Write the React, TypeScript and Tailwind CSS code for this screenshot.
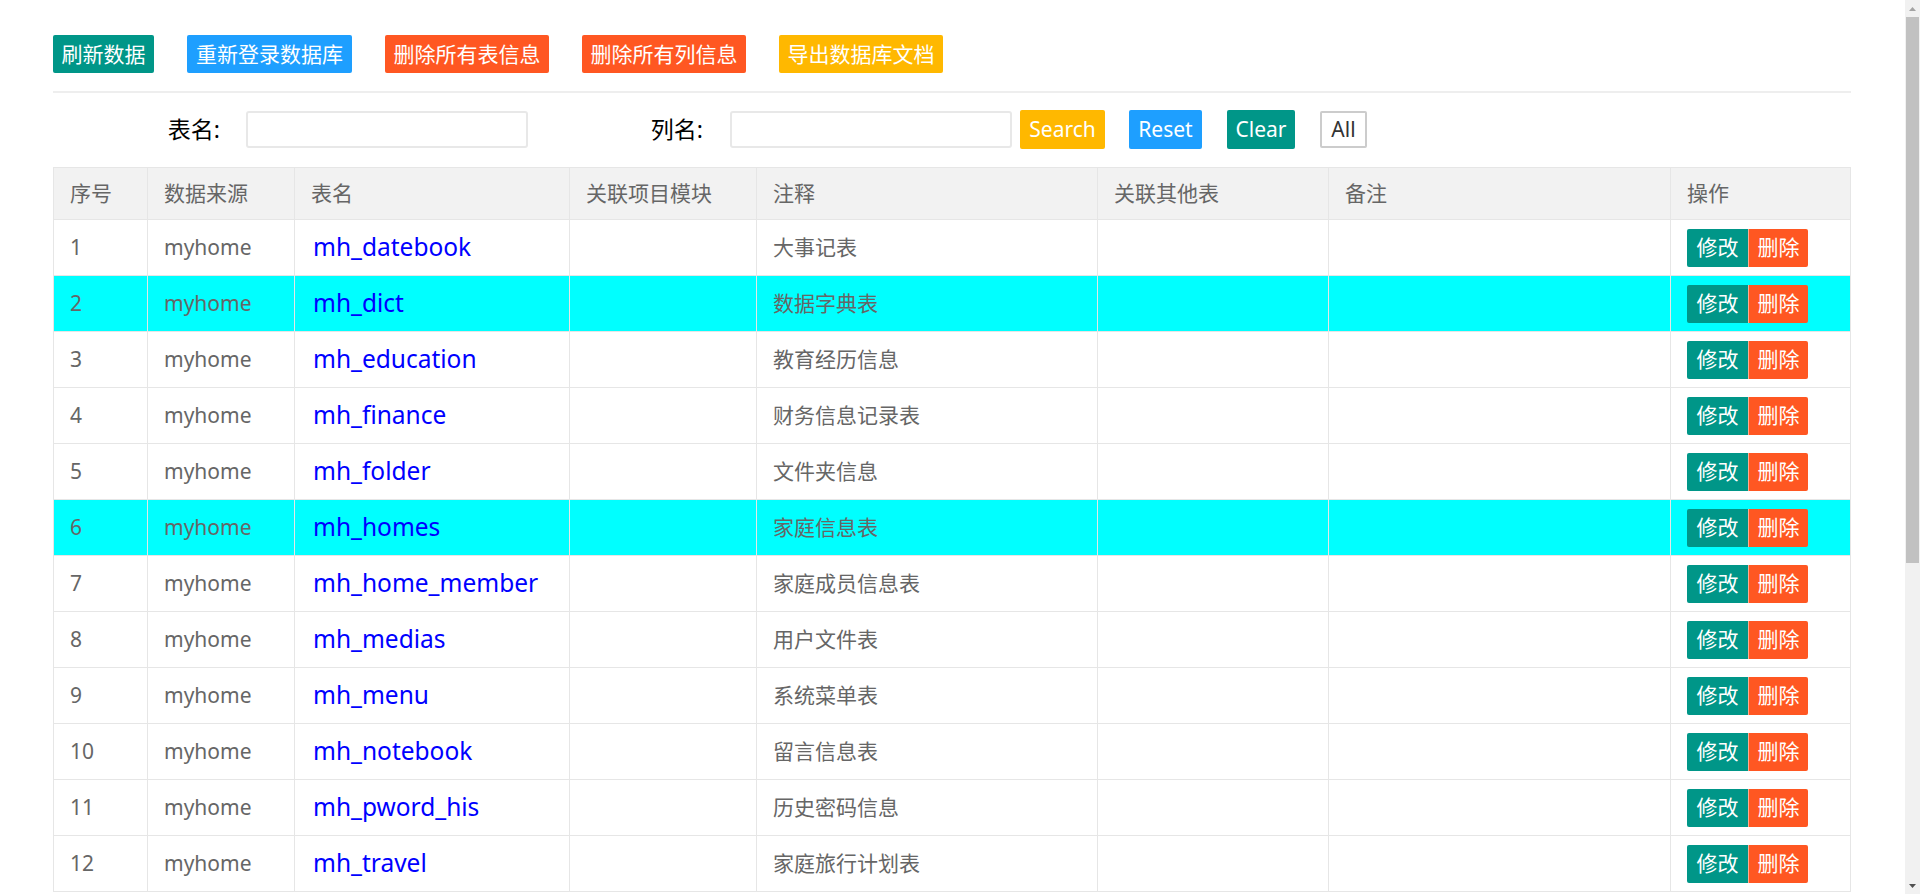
import React from "react";

const rows: { name: string; note: string; hl?: boolean }[] = [
  { name: "mh_datebook", note: "大事记表" },
  { name: "mh_dict", note: "数据字典表", hl: true },
  { name: "mh_education", note: "教育经历信息" },
  { name: "mh_finance", note: "财务信息记录表" },
  { name: "mh_folder", note: "文件夹信息" },
  { name: "mh_homes", note: "家庭信息表", hl: true },
  { name: "mh_home_member", note: "家庭成员信息表" },
  { name: "mh_medias", note: "用户文件表" },
  { name: "mh_menu", note: "系统菜单表" },
  { name: "mh_notebook", note: "留言信息表" },
  { name: "mh_pword_his", note: "历史密码信息" },
  { name: "mh_travel", note: "家庭旅行计划表" },
];

const headers = ["序号", "数据来源", "表名", "关联项目模块", "注释", "关联其他表", "备注", "操作"];

export default function App() {
  return (
    <div
      className="flex h-screen overflow-hidden bg-white"
      style={{ fontFamily: '"Noto Sans", "Noto Sans CJK SC", sans-serif' }}
    >
      <div className="min-w-0 flex-1 overflow-hidden pl-[53px] pr-[54px] pt-[35px]">
        {/* top action buttons */}
        <div className="flex items-center gap-[33px]">
          <button className="h-[38px] w-[101px] rounded-[2px] bg-[#009688] text-[21px] leading-none text-white">刷新数据</button>
          <button className="h-[38px] w-[165px] rounded-[2px] bg-[#1E9FFF] text-[21px] leading-none text-white">重新登录数据库</button>
          <button className="h-[38px] w-[164px] rounded-[2px] bg-[#FF5722] text-[21px] leading-none text-white">删除所有表信息</button>
          <button className="h-[38px] w-[164px] rounded-[2px] bg-[#FF5722] text-[21px] leading-none text-white">删除所有列信息</button>
          <button className="h-[38px] w-[164px] rounded-[2px] bg-[#FFB800] text-[21px] leading-none text-white">导出数据库文档</button>
        </div>

        <div className="mt-[18px] h-[2px] bg-[#eeeeee]" />

        {/* search row */}
        <div className="mt-[17px] flex h-[39px] items-center">
          <div className="w-[167px] text-right text-[23px] leading-none text-black">表名:</div>
          <input className="ml-[26px] h-[37px] w-[282px] rounded-[3px] border-2 border-[#e8e8e8] bg-white px-2 outline-none" />
          <div className="w-[175px] text-right text-[23px] leading-none text-black">列名:</div>
          <input className="ml-[27px] h-[37px] w-[282px] rounded-[3px] border-2 border-[#e8e8e8] bg-white px-2 outline-none" />
          <button className="ml-[8px] h-[39px] w-[85px] rounded-[2px] bg-[#FFB800] text-[21px] leading-none text-white">Search</button>
          <button className="ml-[24px] h-[39px] w-[73px] rounded-[2px] bg-[#1E9FFF] text-[21px] leading-none text-white">Reset</button>
          <button className="ml-[25px] h-[39px] w-[68px] rounded-[2px] bg-[#009688] text-[21px] leading-none text-white">Clear</button>
          <button className="ml-[25px] h-[37px] w-[47px] rounded-[2px] border-2 border-[#cccccc] bg-white text-[21px] leading-none text-[#333]">All</button>
        </div>

        {/* table */}
        <div className="mt-[18px] grid grid-cols-[94px_147px_275px_187px_341px_231px_1fr_180px] border-l border-t border-[#e6e6e6]">
          {headers.map((h) => (
            <div
              key={h}
              className="flex h-[52px] items-center border-b border-r border-[#e6e6e6] bg-[#f2f2f2] pl-4 text-[21px] text-[#666]"
            >
              {h}
            </div>
          ))}
          {rows.map((r, i) => {
            const bg = r.hl ? "bg-[#00ffff]" : "bg-white";
            const cell = `flex h-[56px] items-center border-b border-r border-[#e6e6e6] ${bg}`;
            return (
              <React.Fragment key={r.name}>
                <div className={`${cell} pl-4 text-[21px] text-[#666]`}>{i + 1}</div>
                <div className={`${cell} pl-4 text-[21px] text-[#666]`}>myhome</div>
                <div className={`${cell} pl-[18px] text-[24.5px] text-[#0000ff]`}>{r.name}</div>
                <div className={cell} />
                <div className={`${cell} pl-4 text-[21px] text-[#666]`}>{r.note}</div>
                <div className={cell} />
                <div className={cell} />
                <div className={`${cell} pl-4`}>
                  <div className="flex">
                    <button className="h-[38px] w-[61px] rounded-l-[2px] bg-[#009688] text-[21px] leading-none text-white">修改</button>
                    <button className="h-[38px] w-[60px] rounded-r-[2px] border-l border-[rgba(255,255,255,0.5)] bg-[#FF5722] text-[21px] leading-none text-white">删除</button>
                  </div>
                </div>
              </React.Fragment>
            );
          })}
        </div>
      </div>

      {/* scrollbar */}
      <div className="flex w-[15px] shrink-0 flex-col bg-[#f1f1f1]">
        <div className="flex h-[17px] items-center justify-center">
          <svg width="7" height="4" viewBox="0 0 7 4"><path d="M3.5 0L7 4H0z" fill="#a3a3a3" /></svg>
        </div>
        <div className="mx-[1px] h-[546px] bg-[#c1c1c1]" />
        <div className="flex-1" />
        <div className="flex h-[17px] items-center justify-center">
          <svg width="7" height="4" viewBox="0 0 7 4"><path d="M0 0H7L3.5 4z" fill="#505050" /></svg>
        </div>
      </div>
    </div>
  );
}
